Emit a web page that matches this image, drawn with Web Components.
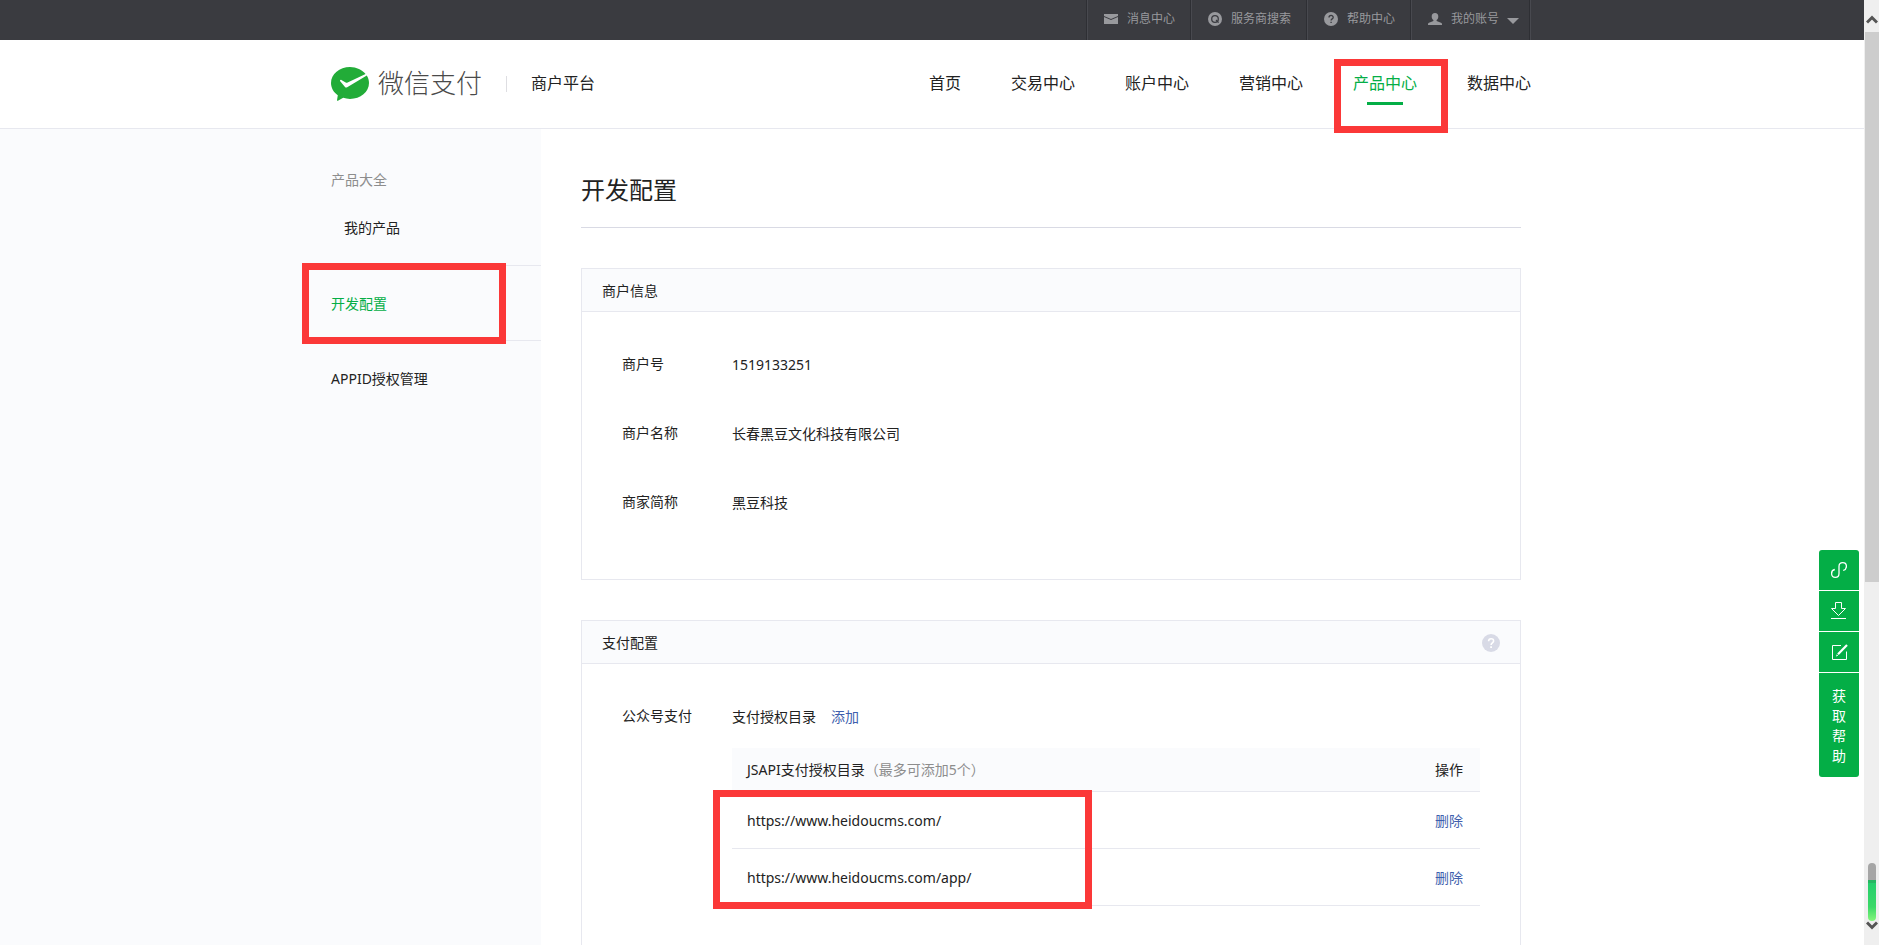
<!DOCTYPE html>
<html lang="zh-CN">
<head>
<meta charset="utf-8">
<title>微信支付 商户平台</title>
<style>
  body {
    margin: 0;
    background: #fff;
    color: #222;
    font: 14px/20px "Noto Sans", "Noto Sans CJK SC", sans-serif;
    --green: #04ae46;
    --line: #e7e8ef;
    --tint: #fafbfd;
    --link: #3f5fae;
    --mark: #fb3838;
  }
</style>
</head>
<body>
<merchant-app></merchant-app>

<script>
const define = (name, html, setup) => {
  const template = document.createElement('template');
  template.innerHTML = html;
  customElements.define(name, class extends HTMLElement {
    constructor() {
      super();
      this.attachShadow({ mode: 'open' }).append(template.content.cloneNode(true));
    }
    connectedCallback() {
      if (setup) setup(this, this.shadowRoot);
    }
  });
};

/* Red outline that calls attention to the element it sits in */
define('mark-frame', `
  <style>
    :host { display: block; position: absolute; box-sizing: border-box; border: 7px solid var(--mark); pointer-events: none; }
  </style>`);

/* Dark utility bar */
define('top-item', `
  <style>
    :host { display: block; }
    a {
      display: flex; align-items: center; box-sizing: border-box; height: 40px;
      padding: 0 15px 2px 16px; border-left: 1px solid #48494f; border-right: 1px solid #2e2f34;
      color: #98999d; font-size: 12px; line-height: 20px; text-decoration: none; white-space: nowrap;
    }
    :host([menu]) a { padding-right: 10px; }
    .icon { display: flex; margin-right: 9px; }
    .arrow { display: none; margin: 4px 0 0 8px; border: 6px solid transparent; border-top-color: #98999d; border-bottom: 0; }
    :host([menu]) .arrow { display: block; }
  </style>
  <a href="#"><span class="icon"><slot name="icon"></slot></span><slot></slot><span class="arrow"></span></a>`);

define('site-topbar', `
  <style>
    :host { display: block; background: #3a3b40; }
    nav { display: flex; justify-content: flex-end; box-sizing: border-box; max-width: 1202px; height: 40px; margin: 0 auto; padding-right: 2px; }
    nav::before, nav::after { content: ""; width: 1px; background: #2e2f34; }
    nav::after { background: #48494f; }
    svg { display: block; }
  </style>
  <nav>
    <top-item>
      <svg slot="icon" width="14" height="14" viewBox="0 0 14 14" fill="#98999d"><path d="M0 2h14v2L7 7 0 4z"/><path d="M0 5l7 3 7-3v7H0z"/></svg>消息中心</top-item>
    <top-item>
      <svg slot="icon" width="14" height="14" viewBox="0 0 14 14"><circle cx="7" cy="7" r="7" fill="#98999d"/><circle cx="7" cy="7" r="3.300" fill="none" stroke="#3a3b40" stroke-width="1.300"/><path d="M8 8l2.600 2.600" stroke="#3a3b40" stroke-width="1.300"/></svg>服务商搜索</top-item>
    <top-item>
      <svg slot="icon" width="14" height="14" viewBox="0 0 14 14"><circle cx="7" cy="7" r="7" fill="#98999d"/><path d="M5 5.600c0-2.800 4.200-2.800 4.200-.2C9.200 6.900 7.100 6.900 7.100 8.600" fill="none" stroke="#3a3b40" stroke-width="1.300"/><path d="M6.400 9.700h1.400v1.400H6.400z" fill="#3a3b40"/></svg>帮助中心</top-item>
    <top-item menu>
      <svg slot="icon" width="14" height="14" viewBox="0 0 14 14" fill="#98999d"><path d="M7 1c2.200 0 3.300 1.400 3.300 3.400 0 1.700-.8 2.900-1.700 3.700v1l4.400 1.600c.7.3 1 .8 1 1.500V13H0v-.8c0-.7.3-1.200 1-1.500l4.400-1.600v-1C4.500 7.300 3.700 6.100 3.700 4.400 3.700 2.400 4.800 1 7 1z"/></svg>我的账号</top-item>
  </nav>`);

/* White header with logo and main navigation */
define('nav-link', `
  <style>
    :host { display: block; position: relative; height: 88px; }
    a { display: block; color: #222; font-size: 16px; line-height: 86px; text-decoration: none; white-space: nowrap; }
    :host([current]) a { color: var(--green); }
    :host([current]) a::after { content: ""; position: absolute; left: 14px; right: 14px; top: 62px; height: 3px; background: var(--green); }
  </style>
  <a href="#"><slot></slot></a><slot name="mark"></slot>`);

define('site-header', `
  <style>
    :host { display: block; border-bottom: 1px solid var(--line); }
    .inner { display: flex; align-items: center; box-sizing: border-box; max-width: 1202px; height: 88px; margin: 0 auto; padding-right: 2px; }
    .logo { display: flex; align-items: center; color: #4a4a4a; font-size: 26px; font-weight: 300; line-height: 36px; text-decoration: none; white-space: nowrap; }
    .logo svg { margin-right: 8px; }
    .logo span, .name { padding-bottom: 2px; }
    .rule { width: 1px; height: 16px; margin: 0 24px; background: #dedee2; }
    .name { font-size: 16px; white-space: nowrap; }
    nav { display: flex; gap: 50px; margin-left: auto; }
    mark-frame { left: -19px; top: 19px; width: 114px; height: 74px; }
  </style>
  <div class="inner">
    <a class="logo" href="#">
      <svg width="39" height="34" viewBox="0 0 39 34"><path d="M19 0C8.500 0 0 7.200 0 16c0 5 2.700 9.300 6.800 12.200L6 33.200c0 .6.500.8.900.5l5.300-2.900c2.100.7 4.400 1.100 6.800 1.100 10.500 0 19-7.100 19-15.900 0-2.700-.8-5.200-2.200-7.400L16.200 20.200c-.8.500-1.500.6-2.200-.1L9.200 14.300c-.6-.9.200-1.900 1.200-1.400l4.300 2.600c.6.300 1.200.3 1.900 0L34.600 7.100C31.200 2.900 25.500 0 19 0z" fill="#22ac38"/></svg><span>微信支付</span></a>
    <span class="rule"></span>
    <span class="name">商户平台</span>
    <nav>
      <nav-link>首页</nav-link>
      <nav-link>交易中心</nav-link>
      <nav-link>账户中心</nav-link>
      <nav-link>营销中心</nav-link>
      <nav-link current>产品中心<mark-frame slot="mark"></mark-frame></nav-link>
      <nav-link>数据中心</nav-link>
    </nav>
  </div>`);

/* Left menu */
define('side-nav', `
  <style>
    :host { display: flex; justify-content: flex-end; background: var(--tint); }
    nav { width: 210px; padding-top: 13px; }
    .group { position: relative; padding: 28px 0 26px; border-bottom: 1px solid var(--line); }
    .group:first-child { padding-bottom: 27px; }
    .group:last-child { border: 0; }
    .head { color: #8d8d8d; }
    a { display: block; color: #222; text-decoration: none; }
    .sub { margin: 28px 0 0 13px; }
    a.current { color: var(--green); }
    mark-frame { left: -29px; top: -3px; width: 204px; height: 81px; }
  </style>
  <nav>
    <div class="group"><div class="head">产品大全</div><a class="sub" href="#">我的产品</a></div>
    <div class="group"><a class="current" href="#">开发配置</a><mark-frame></mark-frame></div>
    <div class="group"><a href="#">APPID授权管理</a></div>
  </nav>`);

/* Titled card */
define('info-panel', `
  <style>
    :host { display: block; margin-top: 40px; border: 1px solid var(--line); }
    header { display: flex; align-items: center; justify-content: space-between; box-sizing: border-box; height: 43px; padding: 2px 20px 0; border-bottom: 1px solid var(--line); background: var(--tint); }
    h2 { margin: 0; font-size: 14px; font-weight: 400; line-height: 20px; }
    .body { display: flex; flex-direction: column; gap: 47px; padding: 42px 40px 65px; }
  </style>
  <header><h2></h2><slot name="tool"></slot></header>
  <div class="body"><slot></slot></div>`,
  (el, root) => { root.querySelector('h2').textContent = el.getAttribute('heading'); });

define('info-row', `
  <style>
    :host { display: flex; }
    .label { flex: 0 0 110px; }
    .value { flex: 1; line-height: 22px; }
  </style>
  <div class="label"></div><div class="value"><slot></slot></div>`,
  (el, root) => { root.querySelector('.label').textContent = el.getAttribute('label'); });

define('path-table', `
  <style>
    :host { display: block; position: relative; margin-top: 20px; line-height: 20px; }
    table { width: 100%; border-collapse: separate; border-spacing: 0; }
    th, td { box-sizing: border-box; height: 57px; padding: 2px 17px 0 15px; border-bottom: 1px solid var(--line); font-weight: 400; text-align: left; }
    th { height: 44px; padding-top: 0; background: var(--tint); }
    th:last-child, td:last-child { text-align: right; }
    small { color: #8d8d8d; font-size: 14px; }
    a { color: var(--link); text-decoration: none; }
    mark-frame { left: -19px; top: 42px; width: 379px; height: 119px; }
  </style>
  <table>
    <thead><tr><th>JSAPI支付授权目录<small>（最多可添加5个）</small></th><th>操作</th></tr></thead>
    <tbody>
      <tr><td>https://www.heidoucms.com/</td><td><a href="#">删除</a></td></tr>
      <tr><td>https://www.heidoucms.com/app/</td><td><a href="#">删除</a></td></tr>
    </tbody>
  </table>
  <mark-frame></mark-frame>`);

define('config-page', `
  <style>
    :host { display: block; padding-left: 40px; }
    .column { max-width: 940px; }
    h1 { margin: 0; padding: 45px 0 21px; border-bottom: 1px solid #d9dae4; font-size: 24px; font-weight: 400; line-height: 32px; }
    .line { display: flex; gap: 15px; }
    a { color: var(--link); text-decoration: none; }
    button { display: flex; padding: 0; border: 0; background: none; }
  </style>
  <div class="column">
    <h1>开发配置</h1>
    <info-panel heading="商户信息">
      <info-row label="商户号">1519133251</info-row>
      <info-row label="商户名称">长春黑豆文化科技有限公司</info-row>
      <info-row label="商家简称">黑豆科技</info-row>
    </info-panel>
    <info-panel heading="支付配置">
      <button slot="tool" type="button" aria-label="帮助"><svg width="18" height="18" viewBox="0 0 18 18"><circle cx="9" cy="9" r="9" fill="#d8dae6"/><path d="M6.600 7.200c0-3.400 5-3.200 5-.3 0 1.900-2.500 2-2.500 4" fill="none" stroke="#fff" stroke-width="1.600"/><path d="M8.200 12.200h1.800V14H8.200z" fill="#fff"/></svg></button>
      <info-row label="公众号支付">
        <div class="line"><span>支付授权目录</span><a href="#">添加</a></div>
        <path-table></path-table>
      </info-row>
    </info-panel>
  </div>`);

/* Floating shortcuts on the right edge */
define('help-dock', `
  <style>
    :host { display: flex; flex-direction: column; gap: 1px; position: fixed; right: 20px; bottom: 168px; width: 40px; border-radius: 3px; overflow: hidden; }
    button { display: flex; align-items: center; justify-content: center; height: 40px; padding: 0; border: 0; background: var(--green); color: #fff; font: inherit; }
    .help { height: 104px; padding: 2px 13px 0; }
    svg { fill: none; stroke: #fff; }
  </style>
  <button type="button" aria-label="小程序"><svg width="16" height="16" viewBox="0 0 16 16"><path d="M3.800 7.500C1.600 8 .6 9.500.6 11.400c0 2.200 1.500 3.900 3.700 3.900s3.700-1.700 3.700-3.900V4.600C8 2.400 9.500.7 11.700.7s3.700 1.500 3.700 3.700c0 1.900-1.200 3.300-3.200 4.100" stroke-width="1.300"/></svg></button>
  <button type="button" aria-label="下载"><svg width="16" height="18" viewBox="0 0 16 18"><path d="M4.500.5h6v6h4L7.500 13.500.5 6.500h4zM0 16.500h15"/></svg></button>
  <button type="button" aria-label="反馈"><svg width="17" height="17" viewBox="0 0 17 17"><path d="M10 1.500H1.500v14h14V7.500"/><path d="M7 10.300L16 1.100" stroke-width="2.200"/><path d="M5 12.500l2.200-.8-1.400-1.400z" fill="#fff" stroke="none"/></svg></button>
  <button type="button" class="help">获取帮助</button>`);

/* Page scroll bar with progress gauge */
define('page-scrollbar', `
  <style>
    :host { display: flex; flex-direction: column; justify-content: space-between; align-items: center; padding-left: 1px; background: #efefef; }
    .thumb { width: 14px; height: 550px; margin-top: 8px; background: #cdcdcd; }
    .top, .end { display: flex; flex-direction: column; align-items: center; }
    .top { padding-top: 14px; }
    .end { padding-bottom: 14px; }
    .gauge { width: 8px; height: 58px; border-radius: 4px; background: linear-gradient(#a6a6a6 17px, #27b562 17px, #27b562 20px, #25ce6c 20px, #3bd968 44px, #86f57c); }
    svg { display: block; fill: none; stroke: #555; stroke-width: 3; }
  </style>
  <div class="top"><svg width="12" height="10" viewBox="0 0 12 10"><path d="M1 8.500l5-5 5 5"/></svg><div class="thumb"></div></div>
  <div class="end"><div class="gauge"></div><svg width="12" height="10" viewBox="0 0 12 10"><path d="M1 1.500l5 5 5-5"/></svg></div>`);

define('merchant-app', `
  <style>
    :host { display: grid; grid-template-columns: minmax(0, 1fr) 15px; height: 100vh; overflow: hidden; }
    .page { display: flex; flex-direction: column; min-height: 0; overflow: hidden; }
    site-topbar, site-header { flex: none; }
    site-header { position: relative; z-index: 1; }
    .main { display: flex; flex: 1; min-height: 0; }
    side-nav { flex: 0 0 calc(50% - 391px); }
    config-page { flex: 1; min-width: 0; }
  </style>
  <div class="page">
    <site-topbar></site-topbar>
    <site-header></site-header>
    <div class="main"><side-nav></side-nav><config-page></config-page></div>
  </div>
  <page-scrollbar></page-scrollbar>
  <help-dock></help-dock>`);
</script>
</body>
</html>
